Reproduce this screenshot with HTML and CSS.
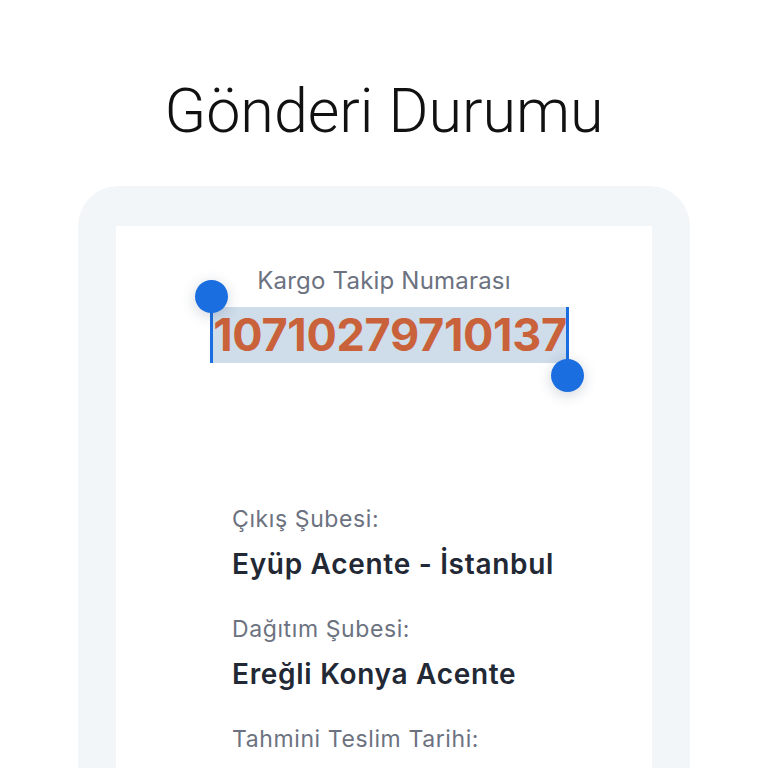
FILE: index.html
```html
<!DOCTYPE html>
<html lang="tr">
<head>
  <meta charset="UTF-8">
  <title>Gönderi Durumu</title>
  <link rel="stylesheet" href="styles.css">
</head>
<body>

  <h1 class="page-title">Gönderi Durumu</h1>

  <section class="status-card">
    <div class="status-inner">

      <!-- tracking number, shown with the text selection on it -->
      <div class="tracking">
        <p class="tracking-label">Kargo Takip Numarası</p>
        <span class="tracking-number">10710279710137<span class="handle handle-start"></span><span class="handle handle-end"></span></span>
      </div>

      <dl class="details">
        <dt>Çıkış Şubesi:</dt>
        <dd>Eyüp Acente - İstanbul</dd>
        <dt>Dağıtım Şubesi:</dt>
        <dd>Ereğli Konya Acente</dd>
        <dt>Tahmini Teslim Tarihi:</dt>
        <dd>&nbsp;</dd>
      </dl>

    </div>
  </section>

</body>
</html>
```

FILE: styles.css
```css
/* page */
body {
  margin: 0;
  background: #fff;
  font-family: Inter, "Noto Sans", sans-serif;
  color: #1f2633;
}

.page-title {
  margin: 76px 0 0;
  text-align: center;
  font-family: Roboto, sans-serif;
  font-weight: 300;
  font-size: 61px;
  line-height: 70px;
  color: #111;
}

/* outer grey frame + inner white panel */
.status-card {
  width: 536px;
  margin: 40px auto 0;
  padding: 40px 38px 0;
  background: #f3f6f9;
  border-radius: 40px 40px 0 0;
}

.status-inner {
  background: #fff;
  padding: 40px 0 60px;
}

/* tracking number */
.tracking {
  text-align: center;
}

.tracking-label {
  margin: 0;
  font-size: 24px;
  line-height: 30px;
  letter-spacing: 0.2px;
  color: #6c7280;
}

.tracking-number {
  position: relative;
  display: inline-block;
  margin: 11px 0 0 11px;
  padding: 0 1px 0 2px;
  background: #cfdcea;
  color: #c9623a;
  font-weight: 700;
  font-size: 45px;
  line-height: 56px;
  letter-spacing: -0.3px;
}

/* selection handles: a blue bar with a round knob */
.handle {
  position: absolute;
  width: 3px;
  background: #1b6ee0;
}

.handle::after {
  content: "";
  position: absolute;
  left: -15px;
  width: 33px;
  height: 33px;
  border-radius: 50%;
  background: #1b6ee0;
  box-shadow: 0 3px 14px rgba(40, 60, 90, 0.22);
}

.handle-start {
  left: -1px;
  top: -11px;
  bottom: 0;
}

.handle-start::after {
  top: -16px;
}

.handle-end {
  right: -1px;
  top: 0;
  bottom: -13px;
}

.handle-end::after {
  bottom: -16px;
}

/* detail list */
.details {
  margin: 141px 0 0;
  padding-left: 116px;
}

.details dt {
  font-size: 23px;
  line-height: 30px;
  letter-spacing: 0.6px;
  color: #6c7280;
}

.details dd {
  margin: 14px 0 34px;
  font-size: 28px;
  line-height: 32px;
  letter-spacing: 0.7px;
  font-weight: 600;
  color: #222834;
}
```
